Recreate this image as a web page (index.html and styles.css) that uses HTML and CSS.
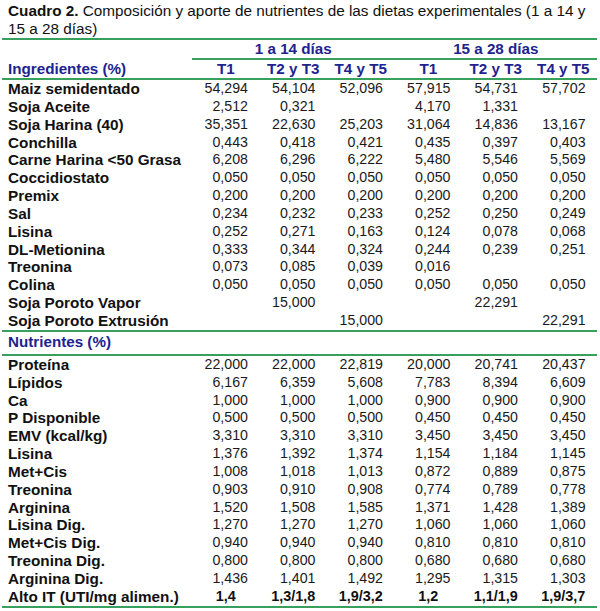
FILE: index.html
```html
<!DOCTYPE html>
<html lang="es">
<head>
<meta charset="utf-8">
<title>Cuadro 2</title>
<link rel="stylesheet" href="styles.css">
</head>
<body>
<div class="page">
  <p class="title"><span class="line"><b>Cuadro 2.</b> Composición y aporte de nutrientes de las dietas experimentales (1 a 14 y</span><span class="line">15 a 28 días)</span></p>
  <table class="diet">
    <colgroup><col class="c-label"><col class="c-val"><col class="c-val"><col class="c-val"><col class="c-val"><col class="c-val"><col class="c-val"></colgroup>
    <thead>
      <tr class="group">
        <th class="blank"></th>
        <th class="grp" colspan="3">1 a 14 días</th>
        <th class="grp" colspan="3">15 a 28 días</th>
      </tr>
      <tr class="sub">
        <th class="sec">Ingredientes (%)</th>
        <th>T1</th><th>T2 y T3</th><th>T4 y T5</th>
        <th>T1</th><th>T2 y T3</th><th>T4 y T5</th>
      </tr>
    </thead>
    <tbody class="ingr">
      <tr><th>Maiz semidentado</th><td>54,294</td><td>54,104</td><td>52,096</td><td>57,915</td><td>54,731</td><td>57,702</td></tr>
      <tr><th>Soja Aceite</th><td>2,512</td><td>0,321</td><td></td><td>4,170</td><td>1,331</td><td></td></tr>
      <tr><th>Soja Harina (40)</th><td>35,351</td><td>22,630</td><td>25,203</td><td>31,064</td><td>14,836</td><td>13,167</td></tr>
      <tr><th>Conchilla</th><td>0,443</td><td>0,418</td><td>0,421</td><td>0,435</td><td>0,397</td><td>0,403</td></tr>
      <tr><th>Carne Harina &lt;50 Grasa</th><td>6,208</td><td>6,296</td><td>6,222</td><td>5,480</td><td>5,546</td><td>5,569</td></tr>
      <tr><th>Coccidiostato</th><td>0,050</td><td>0,050</td><td>0,050</td><td>0,050</td><td>0,050</td><td>0,050</td></tr>
      <tr><th>Premix</th><td>0,200</td><td>0,200</td><td>0,200</td><td>0,200</td><td>0,200</td><td>0,200</td></tr>
      <tr><th>Sal</th><td>0,234</td><td>0,232</td><td>0,233</td><td>0,252</td><td>0,250</td><td>0,249</td></tr>
      <tr><th>Lisina</th><td>0,252</td><td>0,271</td><td>0,163</td><td>0,124</td><td>0,078</td><td>0,068</td></tr>
      <tr><th>DL-Metionina</th><td>0,333</td><td>0,344</td><td>0,324</td><td>0,244</td><td>0,239</td><td>0,251</td></tr>
      <tr><th>Treonina</th><td>0,073</td><td>0,085</td><td>0,039</td><td>0,016</td><td></td><td></td></tr>
      <tr><th>Colina</th><td>0,050</td><td>0,050</td><td>0,050</td><td>0,050</td><td>0,050</td><td>0,050</td></tr>
      <tr><th>Soja Poroto Vapor</th><td></td><td>15,000</td><td></td><td></td><td>22,291</td><td></td></tr>
      <tr class="last"><th>Soja Poroto Extrusión</th><td></td><td></td><td>15,000</td><td></td><td></td><td>22,291</td></tr>
    </tbody>
    <tbody class="nutr">
      <tr class="sec-row"><th class="sec" colspan="7">Nutrientes (%)</th></tr>
      <tr><th>Proteína</th><td>22,000</td><td>22,000</td><td>22,819</td><td>20,000</td><td>20,741</td><td>20,437</td></tr>
      <tr><th>Lípidos</th><td>6,167</td><td>6,359</td><td>5,608</td><td>7,783</td><td>8,394</td><td>6,609</td></tr>
      <tr><th>Ca</th><td>1,000</td><td>1,000</td><td>1,000</td><td>0,900</td><td>0,900</td><td>0,900</td></tr>
      <tr><th>P Disponible</th><td>0,500</td><td>0,500</td><td>0,500</td><td>0,450</td><td>0,450</td><td>0,450</td></tr>
      <tr><th>EMV (kcal/kg)</th><td>3,310</td><td>3,310</td><td>3,310</td><td>3,450</td><td>3,450</td><td>3,450</td></tr>
      <tr><th>Lisina</th><td>1,376</td><td>1,392</td><td>1,374</td><td>1,154</td><td>1,184</td><td>1,145</td></tr>
      <tr><th>Met+Cis</th><td>1,008</td><td>1,018</td><td>1,013</td><td>0,872</td><td>0,889</td><td>0,875</td></tr>
      <tr><th>Treonina</th><td>0,903</td><td>0,910</td><td>0,908</td><td>0,774</td><td>0,789</td><td>0,778</td></tr>
      <tr><th>Arginina</th><td>1,520</td><td>1,508</td><td>1,585</td><td>1,371</td><td>1,428</td><td>1,389</td></tr>
      <tr><th>Lisina Dig.</th><td>1,270</td><td>1,270</td><td>1,270</td><td>1,060</td><td>1,060</td><td>1,060</td></tr>
      <tr><th>Met+Cis Dig.</th><td>0,940</td><td>0,940</td><td>0,940</td><td>0,810</td><td>0,810</td><td>0,810</td></tr>
      <tr><th>Treonina Dig.</th><td>0,800</td><td>0,800</td><td>0,800</td><td>0,680</td><td>0,680</td><td>0,680</td></tr>
      <tr><th>Arginina Dig.</th><td>1,436</td><td>1,401</td><td>1,492</td><td>1,295</td><td>1,315</td><td>1,303</td></tr>
      <tr class="last total"><th>Alto IT (UTI/mg alimen.)</th><td>1,4</td><td>1,3/1,8</td><td>1,9/3,2</td><td>1,2</td><td>1,1/1,9</td><td>1,9/3,7</td></tr>
    </tbody>
  </table>
</div>
</body>
</html>
```

FILE: styles.css
```css
html, body {
  margin: 0;
  padding: 0;
  background: #ffffff;
}

body {
  font-family: "Liberation Sans", Arial, sans-serif;
  color: #111111;
}

.page {
  width: 600px;
}

.title {
  margin: 0;
  padding: 2px 6px 0 8px;
  font-size: 15.3px;
  line-height: 18px;
  height: 38px;
  box-sizing: border-box;
  color: #111111;
}

.title .line {
  display: block;
  white-space: nowrap;
}

.title b {
  font-weight: 700;
}

.diet {
  margin-left: 2px;
  width: 595px;
  table-layout: fixed;
  border-collapse: separate;
  border-spacing: 0;
}

.c-label { width: 190px; }
.c-val { width: 67.5px; }

.diet th,
.diet td {
  padding: 0;
  line-height: 17.85px;
  height: 17.85px;
  white-space: nowrap;
  vertical-align: middle;
}

/* header */
.diet .group th {
  border-top: 2px solid #37a05d;
  color: #1d238f;
  font-size: 15.2px;
  font-weight: 700;
  text-align: center;
  height: 18px;
  line-height: 18px;
}

.diet .group .grp {
  border-bottom: 2px solid #37a05d;
}

.diet .sub th {
  color: #1d238f;
  font-size: 15.2px;
  font-weight: 700;
  text-align: center;
  border-bottom: 2px solid #37a05d;
  height: 18px;
  line-height: 18px;
}

.diet .sub th.sec {
  text-align: left;
  padding-left: 6px;
}

/* body rows */
.diet tbody th {
  text-align: left;
  padding-left: 6px;
  font-size: 15.3px;
  font-weight: 700;
  color: #111111;
}

.diet tbody td {
  text-align: right;
  padding-right: 11.5px;
  font-size: 14.2px;
  color: #1a1a1a;
}

.diet tbody tr.last th,
.diet tbody tr.last td {
  border-bottom: 2px solid #37a05d;
}

.diet tbody .sec-row th.sec {
  height: auto;
  line-height: 16px;
  padding: 2px 0 4px 6px;
  vertical-align: top;
  font-size: 15.2px;
  font-weight: 700;
  color: #1d238f;
  border-bottom: 2px solid #37a05d;
}

.diet tbody tr.total td {
  text-align: center;
  padding-right: 0;
  font-weight: 700;
  font-size: 14.4px;
  color: #111111;
}
```
